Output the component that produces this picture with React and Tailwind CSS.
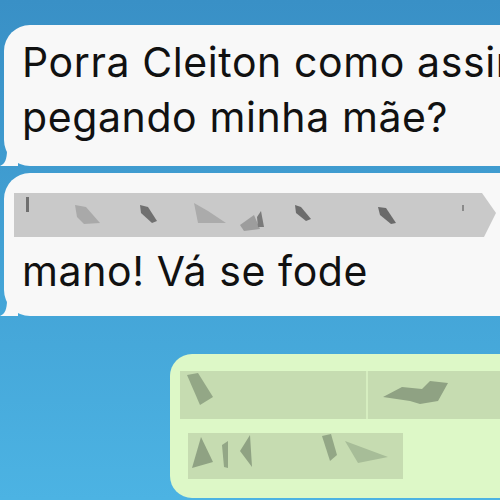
export default function App() {
  return (
    <div className="w-[500px] h-[500px] overflow-hidden bg-linear-to-b from-[#3990c6] to-[#4cb3e3] font-['Inter','Liberation_Sans',sans-serif] text-[#111]">
      <div className="flex flex-col pt-[25px]">
        {/* incoming 1 */}
        <div className="relative ml-[4px] w-[540px] rounded-[26px] bg-[#f8f8f8] pl-[18px] pt-[10px] pb-[21px]">
          <Tail />
          <p className="whitespace-nowrap text-[41px] leading-[55px] tracking-[0.6px]">Porra Cleiton como assim</p>
          <p className="whitespace-nowrap text-[41px] leading-[55px] tracking-[0.6px]">pegando minha mãe?</p>
        </div>

        {/* incoming 2 */}
        <div className="relative ml-[4px] mt-[7px] w-[540px] rounded-[26px] bg-[#f8f8f8] pt-[20px] pb-[17px]">
          <Tail />
          <div className="ml-[10px]">
            <GrayRedaction />
          </div>
          <p className="mt-[5px] pl-[18px] whitespace-nowrap text-[41px] leading-[55px] tracking-[0.6px]">mano! Vá se fode</p>
        </div>

        {/* outgoing */}
        <div className="ml-[170px] mt-[38px] h-[144px] w-[360px] rounded-[22px] bg-[#ddf8c7] pt-[17px]">
          <GreenRedaction />
        </div>
      </div>
    </div>
  )
}

function Tail() {
  return (
    <svg className="absolute left-[-4px] bottom-0" width="18" height="18" viewBox="0 0 18 18">
      <path d="M0 18 C5 16 7 11 7 2 L18 2 L18 18 Z" fill="#f8f8f8" />
    </svg>
  )
}

function GrayRedaction() {
  // local coords: bar starts at x=14, y=193 in the screenshot
  return (
    <svg width="486" height="46" viewBox="0 0 486 46" className="block">
      <polygon points="0,0 468,0 482,20 470,44 0,44" fill="#c9c9c9" />
      <rect x="12" y="4" width="3" height="15" fill="#6f6f6f" />
      <polygon points="61,12 72,14 86,30 70,31 63,24" fill="#a9a9a9" />
      <polygon points="126,12 134,14 143,28 138,30 127,20" fill="#707070" />
      <polygon points="180,10 194,18 212,30 184,30" fill="#ababab" />
      <polygon points="226,32 240,22 246,36 230,38" fill="#9d9d9d" />
      <polygon points="243,24 247,18 250,34 244,34" fill="#7a7a7a" />
      <polygon points="281,12 287,14 297,26 292,28 282,20" fill="#6c6c6c" />
      <polygon points="364,14 372,15 382,30 377,31 366,22" fill="#6a6a6a" />
      <rect x="448" y="12" width="2" height="6" fill="#8a8a8a" />
    </svg>
  )
}

function GreenRedaction() {
  // local coords: bubble left at x=170, bars relative to it
  return (
    <div className="flex flex-col gap-[14px]">
      <svg width="330" height="48" viewBox="0 0 330 48" className="ml-[10px] block">
        <rect x="0" y="0" width="330" height="48" fill="#c6dcb1" />
        <rect x="186" y="0" width="2" height="48" fill="#d6eec0" />
        <polygon points="7,4 18,2 33,26 20,34" fill="#93a786" />
        <polygon points="203,26 222,16 242,18 250,10 268,12 258,30 240,33 230,30" fill="#8fa283" />
      </svg>
      <svg width="215" height="46" viewBox="0 0 215 46" className="ml-[18px] block">
        <rect x="0" y="0" width="215" height="46" fill="#c6dcb1" />
        <polygon points="4,35 13,4 25,29" fill="#8fa283" />
        <polygon points="34,12 40,8 40,35 36,34" fill="#93a786" />
        <polygon points="52,18 62,2 64,34" fill="#8fa283" />
        <polygon points="134,3 143,1 149,22 142,28" fill="#93a786" />
        <polygon points="157,8 200,24 170,30" fill="#a7bd98" />
      </svg>
    </div>
  )
}
